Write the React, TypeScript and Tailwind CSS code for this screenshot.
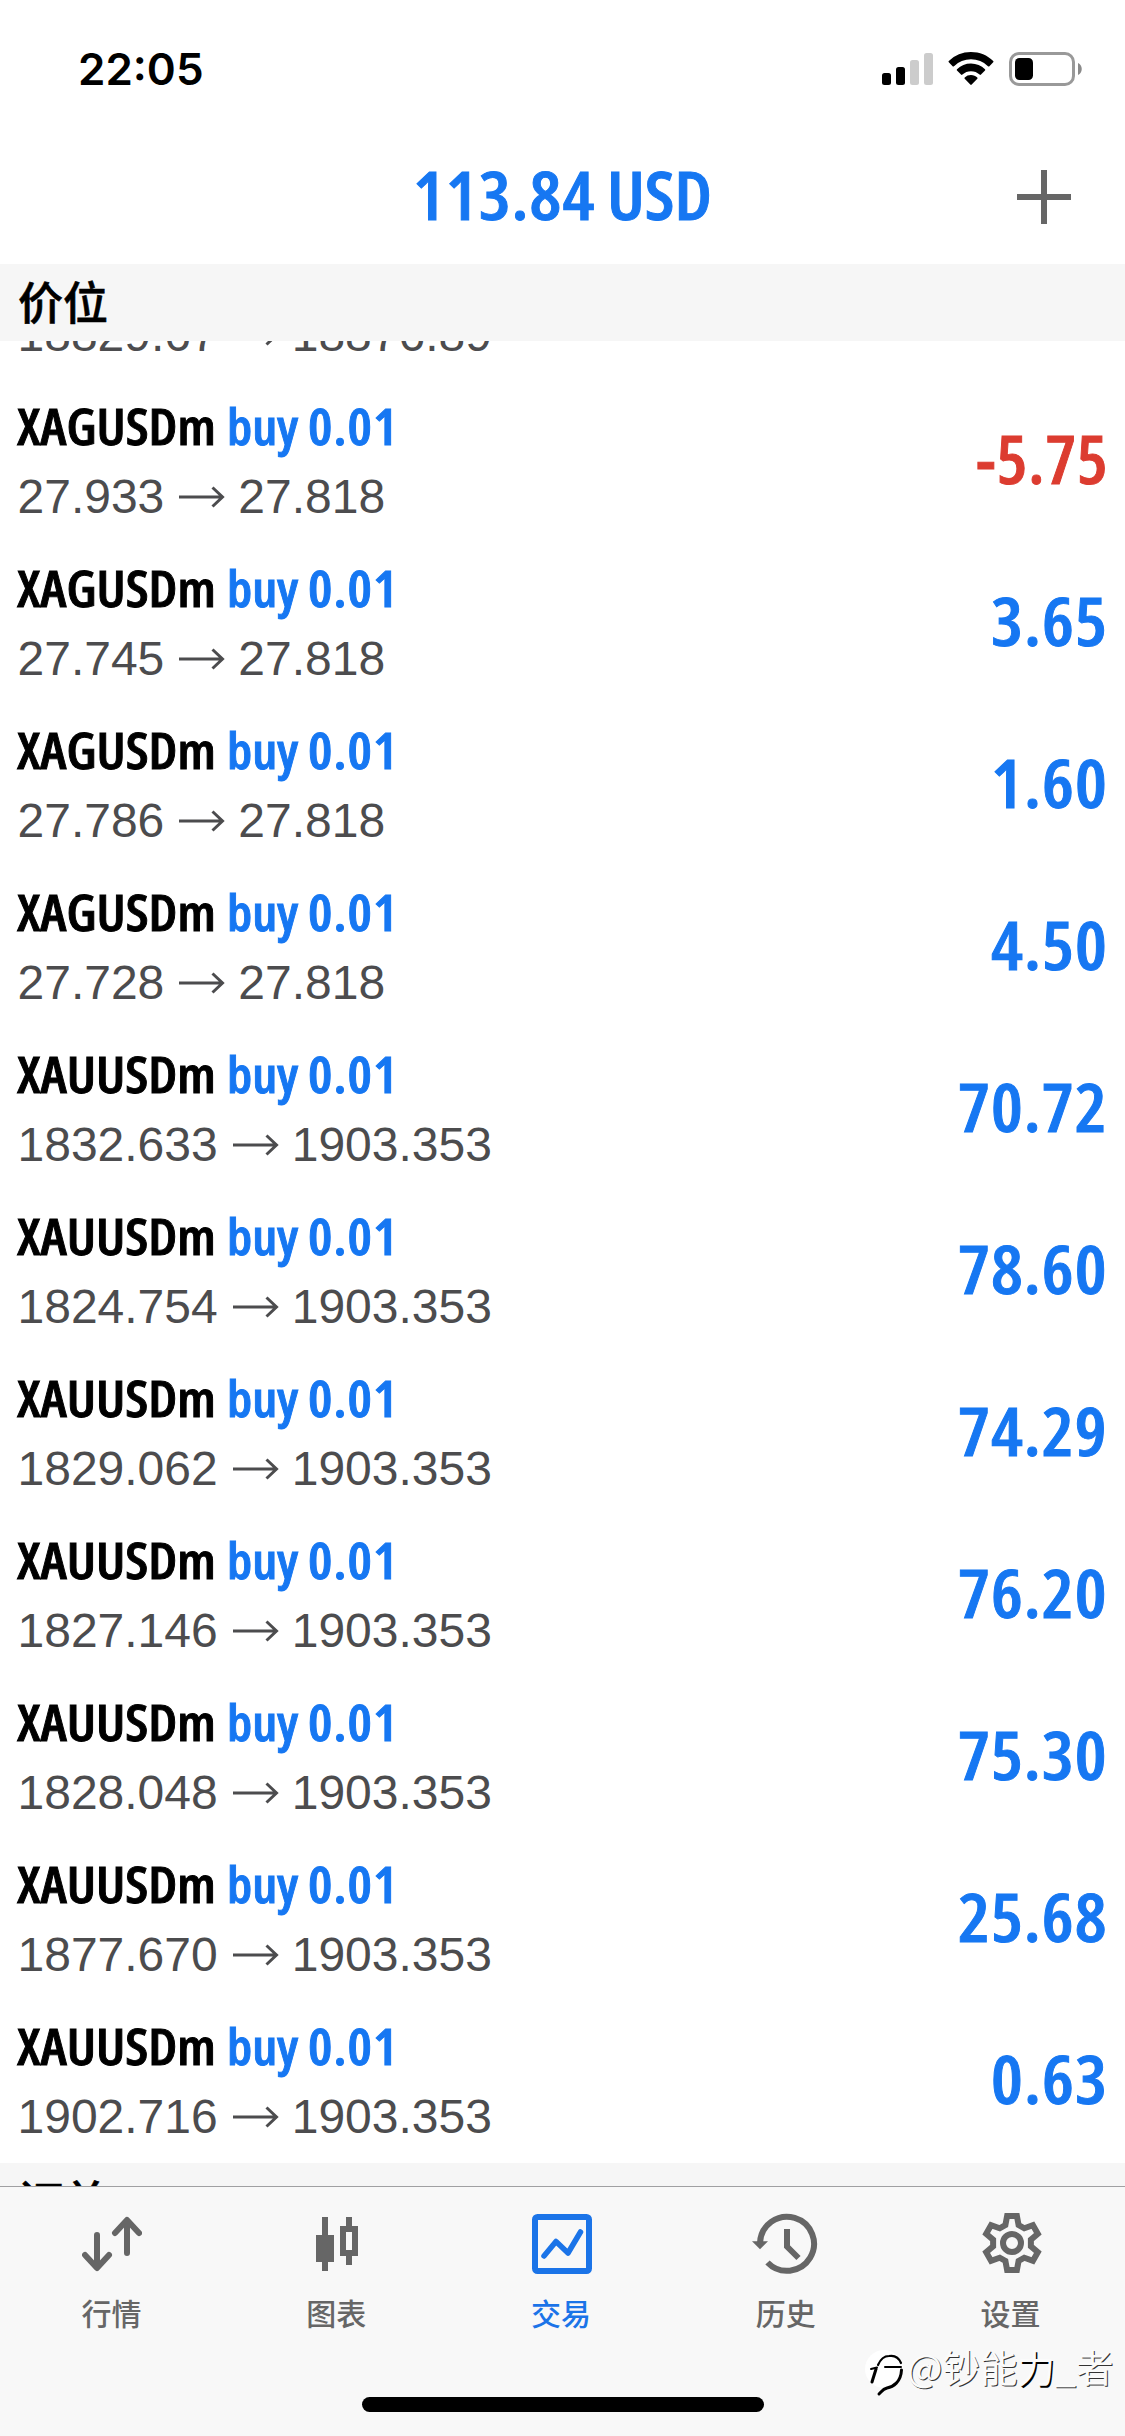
import { useLayoutEffect, useRef, useState, type ReactNode } from "react";

type Position = { symbol: string; open: string; current: string; profit: string };

const positions: Position[] = [
  { symbol: "US30m", open: "18829.67", current: "18876.89", profit: "4.72" },
  { symbol: "XAGUSDm", open: "27.933", current: "27.818", profit: "-5.75" },
  { symbol: "XAGUSDm", open: "27.745", current: "27.818", profit: "3.65" },
  { symbol: "XAGUSDm", open: "27.786", current: "27.818", profit: "1.60" },
  { symbol: "XAGUSDm", open: "27.728", current: "27.818", profit: "4.50" },
  { symbol: "XAUUSDm", open: "1832.633", current: "1903.353", profit: "70.72" },
  { symbol: "XAUUSDm", open: "1824.754", current: "1903.353", profit: "78.60" },
  { symbol: "XAUUSDm", open: "1829.062", current: "1903.353", profit: "74.29" },
  { symbol: "XAUUSDm", open: "1827.146", current: "1903.353", profit: "76.20" },
  { symbol: "XAUUSDm", open: "1828.048", current: "1903.353", profit: "75.30" },
  { symbol: "XAUUSDm", open: "1877.670", current: "1903.353", profit: "25.68" },
  { symbol: "XAUUSDm", open: "1902.716", current: "1903.353", profit: "0.63" },
];

const condensed =
  "font-['Open_Sans','Noto_Sans',sans-serif] [font-stretch:75%] font-semibold [-webkit-text-stroke:0.9px_currentColor]";

/** Text squeezed or stretched horizontally to an exact width. */
function FitText({ width, className = "", children }: { width: number; className?: string; children: ReactNode }) {
  const ref = useRef<HTMLSpanElement>(null);
  const [scale, setScale] = useState(1);
  useLayoutEffect(() => {
    if (ref.current) setScale(width / ref.current.offsetWidth);
  }, [width]);
  return (
    <span className="block shrink-0" style={{ width }}>
      <span
        ref={ref}
        className={`inline-block origin-left whitespace-nowrap ${className}`}
        style={{ transform: `scaleX(${scale})` }}
      >
        {children}
      </span>
    </span>
  );
}

function profitWidth(value: string) {
  return [...value].reduce((sum, c) => sum + (c === "." ? 16.7 : c === "-" ? 15.5 : 33.3), 0);
}

function StatusBar() {
  return (
    <div className="flex h-[132px] items-start justify-between pr-[43px] pl-[78px] pt-[42px]">
      <FitText width={126} className="font-['Inter',sans-serif] text-[44px] leading-[54px] font-semibold text-black">
        22:05
      </FitText>
      <div className="flex items-start pt-[10px]">
        <svg width="51" height="34" viewBox="0 0 51 34">
          <rect x="0" y="21" width="9" height="12" rx="2.5" fill="#000" />
          <rect x="14" y="15" width="9" height="18" rx="2.5" fill="#000" />
          <rect x="28" y="8" width="9" height="25" rx="2.5" fill="#ccc" />
          <rect x="42" y="1" width="9" height="32" rx="2.5" fill="#ccc" />
        </svg>
        <svg className="ml-[15px]" width="46" height="34" viewBox="0 0 46 34">
          <path d="M23 0C31.600 0 39.400 3.300 45.200 8.900Q45.800 9.600 45.200 10.300L41.400 14.200Q40.700 14.800 40 14.200A24.500 24.500 0 0 0 6 14.200Q5.300 14.800 4.600 14.200L.8 10.300Q.2 9.600 .8 8.900A32 32 0 0 1 23 0Z" />
          <path d="M23 11.600C28.400 11.600 33.300 13.700 37 17.200Q37.600 17.900 37 18.600L33 22.600Q32.300 23.200 31.600 22.600A12.600 12.600 0 0 0 14.400 22.600Q13.700 23.200 13 22.600L9 18.600Q8.400 17.900 9 17.200A20.200 20.200 0 0 1 23 11.600Z" />
          <path d="M23 23C25.500 23 27.700 23.900 29.300 25.400Q29.900 26.100 29.300 26.800L23.700 32.600Q23 33.300 22.300 32.600L16.700 26.800Q16.100 26.100 16.700 25.400A9.200 9.200 0 0 1 23 23Z" />
        </svg>
        <svg className="ml-[15px]" width="73" height="34" viewBox="0 0 73 34">
          <rect x="1.500" y="1.500" width="63" height="31" rx="8.500" fill="none" stroke="#999" strokeWidth="3" />
          <rect x="6" y="6" width="18" height="22" rx="4.500" fill="#000" />
          <path d="M69 11C74 13 74 21 69 23Z" fill="#8a8a8a" />
        </svg>
      </div>
    </div>
  );
}

function TitleBar() {
  return (
    <div className="flex h-[132px] items-start pr-[54px] pl-[413px]">
      <FitText width={182} className={`${condensed} pt-[17px] text-[66px] leading-[90px] tracking-[1px] text-[#1677f2]`}>
        113.84
      </FitText>
      <FitText width={105} className={`${condensed} ml-[12px] pt-[17px] text-[66px] leading-[90px] text-[#1677f2]`}>
        USD
      </FitText>
      <svg className="mt-[38px] ml-auto" width="54" height="54" viewBox="0 0 54 54" stroke="#666" strokeWidth="6">
        <path d="M27 0V54M0 27H54" />
      </svg>
    </div>
  );
}

function SectionHeader({ title }: { title: string }) {
  return (
    <div className="flex h-[77px] shrink-0 items-center bg-[#f6f6f6] pl-[18px]">
      <span className="-mt-[3px] font-['Noto_Sans_CJK_SC',sans-serif] text-[45px] leading-[66px] font-medium text-black [-webkit-text-stroke:0.6px_currentColor]">
        {title}
      </span>
    </div>
  );
}

function PositionRow({ symbol, open, current, profit }: Position) {
  const negative = profit.startsWith("-");
  return (
    <div className="flex h-[162px] shrink-0 items-start justify-between pr-[17px] pl-[17px]">
      <div className="flex flex-col pt-[7px]">
        <div className="flex">
          <FitText width={symbol.length * 28.4} className={`${condensed} text-[51px] leading-[74px] text-black`}>
            {symbol}
          </FitText>
          <FitText width={71} className={`${condensed} ml-[11px] text-[51px] leading-[74px] text-[#1677f2]`}>
            buy
          </FitText>
          <FitText
            width={91}
            className={`${condensed} ml-[21px] text-[51px] leading-[74px] tracking-[1px] text-[#1677f2]`}
          >
            0.01
          </FitText>
        </div>
        <div className="mt-[5px] ml-[0.5px] flex items-center font-['Liberation_Sans',sans-serif] text-[48px] leading-[60px] text-[#4c4c4e]">
          <span>{open}</span>
          <svg className="mx-[13px]" width="48" height="24" viewBox="0 0 48 24" fill="none" stroke="#4c4c4e" strokeWidth="3">
            <path d="M2 12H46M35.500 2.500L45.500 12L35.500 21.500" />
          </svg>
          <span>{current}</span>
        </div>
      </div>
      <div className="pt-[32px]">
        <FitText
          width={profitWidth(profit)}
          className={`${condensed} text-[66px] leading-[90px] tracking-[1px] ${negative ? "text-[#dc3c30]" : "text-[#1677f2]"}`}
        >
          {profit}
        </FitText>
      </div>
    </div>
  );
}

function QuotesIcon() {
  return (
    <svg width="60" height="60" viewBox="0 0 60 60" fill="none" stroke="currentColor" strokeWidth="6" strokeLinecap="round" strokeLinejoin="round">
      <path d="M15 21V53M3 41L15 54L27 41M45 39V7M33 19L45 6L57 19" />
    </svg>
  );
}

function ChartIcon() {
  return (
    <svg width="60" height="60" viewBox="0 0 60 60" fill="currentColor">
      <path d="M15 3H21V21H27V48H21V57H15V48H9V21H15Z" />
      <path fillRule="evenodd" d="M39 3H45V12H51V42H45V51H39V42H33V12H39ZM39 18V36H45V18Z" />
    </svg>
  );
}

function TradeIcon() {
  return (
    <svg width="60" height="60" viewBox="0 0 60 60" fill="none" stroke="currentColor" strokeWidth="6">
      <rect x="3" y="3" width="54" height="54" rx="2.500" />
      <path d="M12 42L24 27.500L36 39L48.500 18" strokeWidth="5.500" strokeLinecap="round" strokeLinejoin="round" />
    </svg>
  );
}

function HistoryIcon() {
  return (
    <svg className="overflow-visible" width="60" height="60" viewBox="0 0 60 60" fill="none" stroke="currentColor" strokeWidth="6">
      <path d="M3 29A27 27 0 1 1 10.500 48.500" />
      <path d="M-5 27.300H11L3 35.300Z" fill="currentColor" stroke="none" />
      <path d="M30 15V32.500L41.500 44" />
    </svg>
  );
}

function SettingsIcon() {
  const teeth = [0, 60, 120, 180, 240, 300].flatMap((deg) => {
    const a = (deg * Math.PI) / 180;
    return [
      [-6.6, -18],
      [-4.900, -27],
      [4.900, -27],
      [6.6, -18],
    ].map(([x, y]) => `${(30 + x * Math.cos(a) - y * Math.sin(a)).toFixed(2)},${(30 + x * Math.sin(a) + y * Math.cos(a)).toFixed(2)}`);
  });
  return (
    <svg className="-mt-px mb-px" width="60" height="60" viewBox="0 0 60 60" fill="none" stroke="currentColor" strokeWidth="6">
      <polygon points={teeth.join(" ")} />
      <circle cx="30" cy="30" r="9" />
    </svg>
  );
}

const tabs = [
  { label: "行情", icon: <QuotesIcon /> },
  { label: "图表", icon: <ChartIcon /> },
  { label: "交易", icon: <TradeIcon />, active: true },
  { label: "历史", icon: <HistoryIcon /> },
  { label: "设置", icon: <SettingsIcon /> },
];

function Watermark() {
  return (
    <div className="absolute top-[2339px] left-[863px] flex items-start">
      <svg width="44" height="60" viewBox="0 0 44 60" fill="none" stroke="#000" strokeLinecap="round">
        <circle cx="21" cy="30" r="19" fill="#fff" stroke="none" />
        <path d="M15 26C18 19 22 17 26 17C32 16 36 19 38 24" strokeWidth="2.200" />
        <path d="M38.500 31C38 43 30 48 24 49C20 50 19 52 16 55" strokeWidth="3" />
        <path d="M8 30L14 28.500M22 28H38" strokeWidth="2" />
        <path d="M13 30L9 43" strokeWidth="3" />
      </svg>
      <span className="-mt-px font-['Noto_Sans_CJK_SC',sans-serif] text-[37.5px] leading-[56px] whitespace-nowrap text-[#fbfbfb] [text-shadow:1px_1px_0.5px_#333]">
        @钞能<span className="[text-shadow:1.5px_1.5px_0_#000]">力</span>_者
      </span>
    </div>
  );
}

export default function App() {
  return (
    <div className="relative flex h-[2436px] w-[1125px] flex-col overflow-hidden bg-white">
      <StatusBar />
      <TitleBar />
      <SectionHeader title="价位" />
      <div className="flex h-[1845px] flex-col justify-start overflow-hidden">
        <div className="-mt-[122px] flex flex-col">
          {positions.map((p) => (
            <PositionRow key={p.open} {...p} />
          ))}
          <SectionHeader title="订单" />
        </div>
      </div>
      <nav className="flex h-[250px] shrink-0 flex-col items-center border-t border-[#a0a0a2] bg-[#f8f8f8]">
        <div className="grid w-full grid-cols-5 pr-px">
          {tabs.map((tab) => (
            <div key={tab.label} className={`flex flex-col items-center pt-[27px] ${tab.active ? "text-[#1b74e8]" : "text-[#666]"}`}>
              {tab.icon}
              <span className="mt-[18px] mr-[2px] font-['Noto_Sans_CJK_SC',sans-serif] text-[30px] leading-[40px] font-medium">
                {tab.label}
              </span>
            </div>
          ))}
        </div>
        <div className="mt-[65px] h-[15px] w-[402px] rounded-full bg-black" />
      </nav>
      <Watermark />
    </div>
  );
}
